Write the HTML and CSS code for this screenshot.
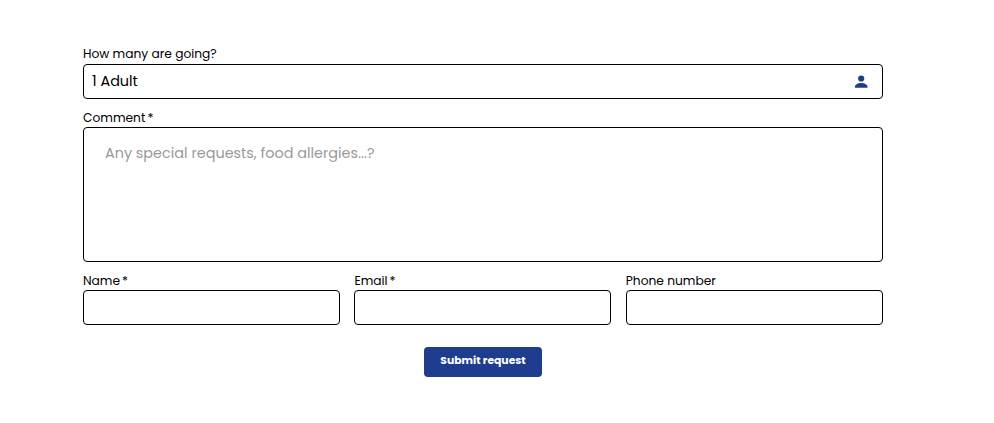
FILE: index.html
```html
<!DOCTYPE html>
<html lang="en">
<head>
    <meta charset="UTF-8">
    <meta name="viewport" content="width=device-width, initial-scale=1.0">
    <title>Request form</title>
    <link rel="stylesheet" href="styles.css">
</head>
<body>
    <form class="request-form">
        <div class="field">
            <label for="guests">How many are going?</label>
            <div class="guest-select" id="guests">
                <span class="guest-value">1 Adult</span>
                <svg class="guest-icon" width="14" height="14" viewBox="0 0 14 14">
                    <circle cx="7.2" cy="3.5" r="3.1"/>
                    <path d="M.9 12.8v-1C.9 9.6 4.2 8 7.2 8s6.3 1.6 6.3 3.8v1z"/>
                </svg>
            </div>
        </div>

        <div class="field">
            <label class="required" for="comment">Comment *</label>
            <textarea id="comment" placeholder="Any special requests, food allergies...?"></textarea>
        </div>

        <!-- Contact details -->
        <div class="contact-row">
            <div class="field">
                <label class="required" for="name">Name *</label>
                <input type="text" id="name">
            </div>
            <div class="field">
                <label class="required" for="email">Email *</label>
                <input type="email" id="email">
            </div>
            <div class="field">
                <label class="optional" for="phone">Phone number</label>
                <input type="tel" id="phone">
            </div>
        </div>

        <button type="submit" class="submit-button">Submit request</button>
    </form>
</body>
</html>
```
FILE: styles.css
```css
* {
    margin: 0;
    padding: 0;
    box-sizing: border-box;
}
body {
    font-family: Poppins, Inter, sans-serif;
    font-size: 14.4px;
    background-color: #fff;
    color: #000;
}
.request-form {
    display: flex;
    flex-direction: column;
    width: 800px;
    margin: 44px 0 0 83px;
    gap: 8px;
}
.field {
    display: flex;
    flex-direction: column;
}
label {
    height: 20px;
    line-height: 20px;
    font-size: 0.85em;
    white-space: nowrap;
}
label.required,
label.optional {
    line-height: 22px;
}
label.required {
    word-spacing: -1.2px;
}
.guest-select {
    display: flex;
    align-items: center;
    justify-content: space-between;
    height: 35px;
    padding: 0 14px 0 8px;
    border: 1px solid #000;
    border-radius: 4px;
}
.guest-icon {
    fill: #1e3d8f;
}
textarea,
input {
    width: 100%;
    border: 1px solid #000;
    border-radius: 4px;
    background-color: #fff;
    font-family: inherit;
    font-size: 1em;
}
textarea {
    display: block;
    height: 135px;
    padding: 15px 21px;
    line-height: 21px;
    resize: none;
}
textarea::placeholder {
    color: #999;
}
input {
    height: 35px;
    padding: 0 8px;
}
.contact-row {
    display: grid;
    grid-template-columns: repeat(3, 257px);
    gap: 14.4px;
}
.submit-button {
    align-self: center;
    width: 118px;
    height: 30px;
    margin-top: 14px;
    padding-bottom: 3px;
    border: none;
    border-radius: 4px;
    background-color: #1e3d8f;
    color: #fff;
    font-family: inherit;
    font-size: 0.75em;
    font-weight: 700;
    white-space: nowrap;
}
```
